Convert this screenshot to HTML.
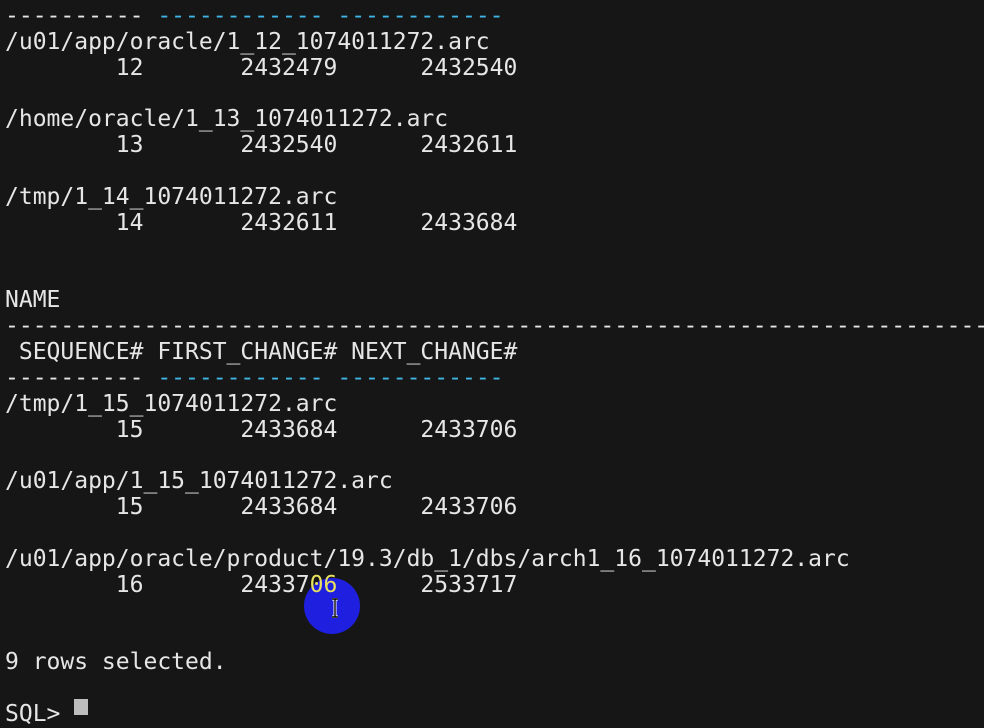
<!DOCTYPE html>
<html><head><meta charset="utf-8"><style>
html,body{margin:0;padding:0;width:984px;height:708px;overflow:hidden;background:#161616;}
pre{position:absolute;left:5px;top:4px;margin:0;font-family:"DejaVu Sans Mono","Liberation Mono",monospace;font-size:23px;line-height:25.85px;color:#e6e6e6;white-space:pre;z-index:2;}
.b{color:#3fb6e6}
.y{color:#e8e060}
#dot{position:absolute;left:304px;top:578px;width:56px;height:56px;border-radius:50%;background:#1f1fe0;z-index:1;}
#ib{position:absolute;left:331px;top:598px;width:8px;height:20px;z-index:3;}
#cur{position:absolute;left:74px;top:699px;width:14px;height:16px;background:#bdbdbd;}
</style></head><body>
<pre>---------- <span class="b">------------ ------------</span>
/u01/app/oracle/1_12_1074011272.arc
        12       2432479      2432540

/home/oracle/1_13_1074011272.arc
        13       2432540      2432611

/tmp/1_14_1074011272.arc
        14       2432611      2433684


NAME
-----------------------------------------------------------------------
 SEQUENCE# FIRST_CHANGE# NEXT_CHANGE#
---------- <span class="b">------------ ------------</span>
/tmp/1_15_1074011272.arc
        15       2433684      2433706

/u01/app/1_15_1074011272.arc
        15       2433684      2433706

/u01/app/oracle/product/19.3/db_1/dbs/arch1_16_1074011272.arc
        16       24337<span class="y">06</span>      2533717


9 rows selected.

SQL> </pre>
<div id="dot"></div>
<svg id="ib" viewBox="0 0 8 20"><path d="M1 1h6M4 1v18M1 19h6" stroke="#fff" stroke-width="3" fill="none"/><path d="M1 1h6M4 1v18M1 19h6" stroke="#000" stroke-width="1.4" fill="none"/></svg>
<div id="cur"></div>
</body></html>
